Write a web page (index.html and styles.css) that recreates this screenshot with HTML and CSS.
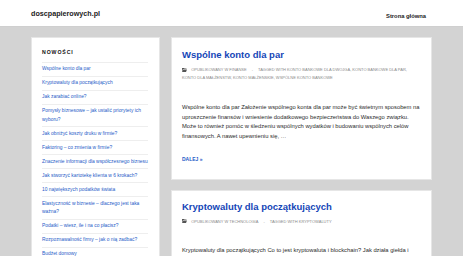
FILE: index.html
```html
<!DOCTYPE html>
<html lang="pl">
<head>
<meta charset="utf-8">
<title>doscpapierowych.pl</title>
<link rel="stylesheet" href="styles.css">
</head>
<body>
<header class="site-header">
  <div class="container header-inner">
    <a class="logo" href="#">doscpapierowych.pl</a>
    <nav class="nav"><a href="#">Strona główna</a></nav>
  </div>
</header>
<div class="container layout">
  <aside class="sidebar card">
    <h2 class="widget-title">NOWOŚCI</h2>
    <ul class="recent">
      <li><a href="#">Wspólne konto dla par</a></li>
      <li><a href="#">Kryptowaluty dla początkujących</a></li>
      <li><a href="#">Jak zarabiać online?</a></li>
      <li><a href="#">Pomysły biznesowe – jak ustalić priorytety ich wyboru?</a></li>
      <li><a href="#">Jak obniżyć koszty druku w firmie?</a></li>
      <li><a href="#">Faktoring – co zmienia w firmie?</a></li>
      <li><a href="#">Znaczenie informacji dla współczesnego biznesu</a></li>
      <li><a href="#">Jak stworzyć kartotekę klienta w 6 krokach?</a></li>
      <li><a href="#">10 największych podatków świata</a></li>
      <li><a href="#">Elastyczność w biznesie – dlaczego jest taka ważna?</a></li>
      <li><a href="#">Podatki – wiesz, ile i na co płacisz?</a></li>
      <li><a href="#">Rozpoznawalność firmy – jak o nią zadbać?</a></li>
      <li><a href="#">Budżet domowy</a></li>
    </ul>
  </aside>
  <main class="posts">
    <article class="card post">
      <h1 class="post-title"><a href="#">Wspólne konto dla par</a></h1>
      <div class="meta">
        <svg class="folder" viewBox="0 0 10 8" width="5" height="4"><path d="M0 0h4l1 1h4v1H2L0 7z M2.5 3H10L8 8H0z" fill="#555"/></svg>
        <span>OPUBLIKOWANY W FINANSE</span><span class="sep">-</span><span>TAGGED WITH KONTO BANKOWE DLA DWOJGA, KONTO BANKOWE DLA PAR, KONTO DLA MAŁŻEŃSTW, KONTO MAŁŻEŃSKIE, WSPÓLNE KONTO BANKOWE</span>
      </div>
      <p class="excerpt">Wspólne konto dla par Założenie wspólnego konta dla par może być świetnym sposobem na uproszczenie finansów i wniesienie dodatkowego bezpieczeństwa do Waszego związku. Może to również pomóc w śledzeniu wspólnych wydatków i budowaniu wspólnych celów finansowych. A nawet upewnieniu się, …</p>
      <a class="more" href="#">DALEJ »</a>
    </article>
    <article class="card post">
      <h1 class="post-title"><a href="#">Kryptowaluty dla początkujących</a></h1>
      <div class="meta">
        <svg class="folder" viewBox="0 0 10 8" width="5" height="4"><path d="M0 0h4l1 1h4v1H2L0 7z M2.5 3H10L8 8H0z" fill="#555"/></svg>
        <span>OPUBLIKOWANY W TECHNOLOGIA</span><span class="sep">-</span><span>TAGGED WITH KRYPTOWALUTY</span>
      </div>
      <p class="excerpt">Kryptowaluty dla początkujących Co to jest kryptowaluta i blockchain? Jak działa giełda i kryptowaluty? Jak zacząć inwestować w kryptowaluty? Na co zwracać uwagę?</p>
    </article>
  </main>
</div>
</body>
</html>
```
FILE: styles.css
```css
* { box-sizing: border-box; }
html, body { margin: 0; padding: 0; }
body {
  background: #d3d3d3;
  font-family: "Liberation Sans", Arial, sans-serif;
  color: #2b2b2b;
  overflow: hidden;
  height: 256px;
}
a { text-decoration: none; }
.container {
  width: 401px;
  margin: 0 auto;
}
.site-header {
  background: #fff;
  height: 27px;
  border-bottom: 1px solid #cfcfcf;
}
.header-inner {
  height: 100%;
  display: flex;
  align-items: center;
  justify-content: space-between;
  padding: 0 6px 0 0;
}
.logo {
  font-weight: bold;
  font-size: 7.2px;
  color: #222;
  margin-top: 1px;
}
.nav a {
  font-weight: bold;
  font-size: 5.8px;
  color: #222;
}
.layout {
  display: flex;
  align-items: flex-start;
  gap: 11px;
  padding-top: 10px;
}
.card {
  background: #fff;
  border: 1px solid #e6e6e6;
}
.sidebar {
  width: 129px;
  flex: none;
  padding: 10px 11px 10px 10px;
}
.widget-title {
  margin: 0 0 6px;
  font-size: 5.2px;
  line-height: 8px;
  letter-spacing: 0.9px;
  font-weight: bold;
  color: #111;
}
.recent {
  list-style: none;
  margin: 0;
  padding: 0;
}
.recent li {
  border-top: 1px solid #eeeeee;
  padding: 2.3px 0;
  font-size: 4.9px;
  line-height: 8.4px;
}
.recent a { color: #1f5cc8; }
.posts {
  flex: 1;
  display: flex;
  flex-direction: column;
  gap: 10px;
}
.post {
  padding: 11px 11px 16px 10px;
}
.post-title {
  margin: 0;
  font-size: 9.5px;
  line-height: 12px;
}
.post-title a { color: #1446b7; }
.meta {
  margin-top: 5px;
  font-size: 4px;
  line-height: 8px;
  color: #8a8a8a;
}
.folder { margin-right: 3px; vertical-align: -0.5px; }
.sep { margin: 0 5px; }
.excerpt {
  margin: 21px 0 0;
  font-size: 5.8px;
  line-height: 9.7px;
  color: #2a2a2a;
}
.more {
  display: block;
  margin-top: 13px;
  font-size: 5px;
  line-height: 8px;
  font-weight: bold;
  color: #1f5cc8;
}
.posts .post + .post { padding-top: 10px; }
.posts .post + .post .excerpt { margin-top: 20px; }
```
